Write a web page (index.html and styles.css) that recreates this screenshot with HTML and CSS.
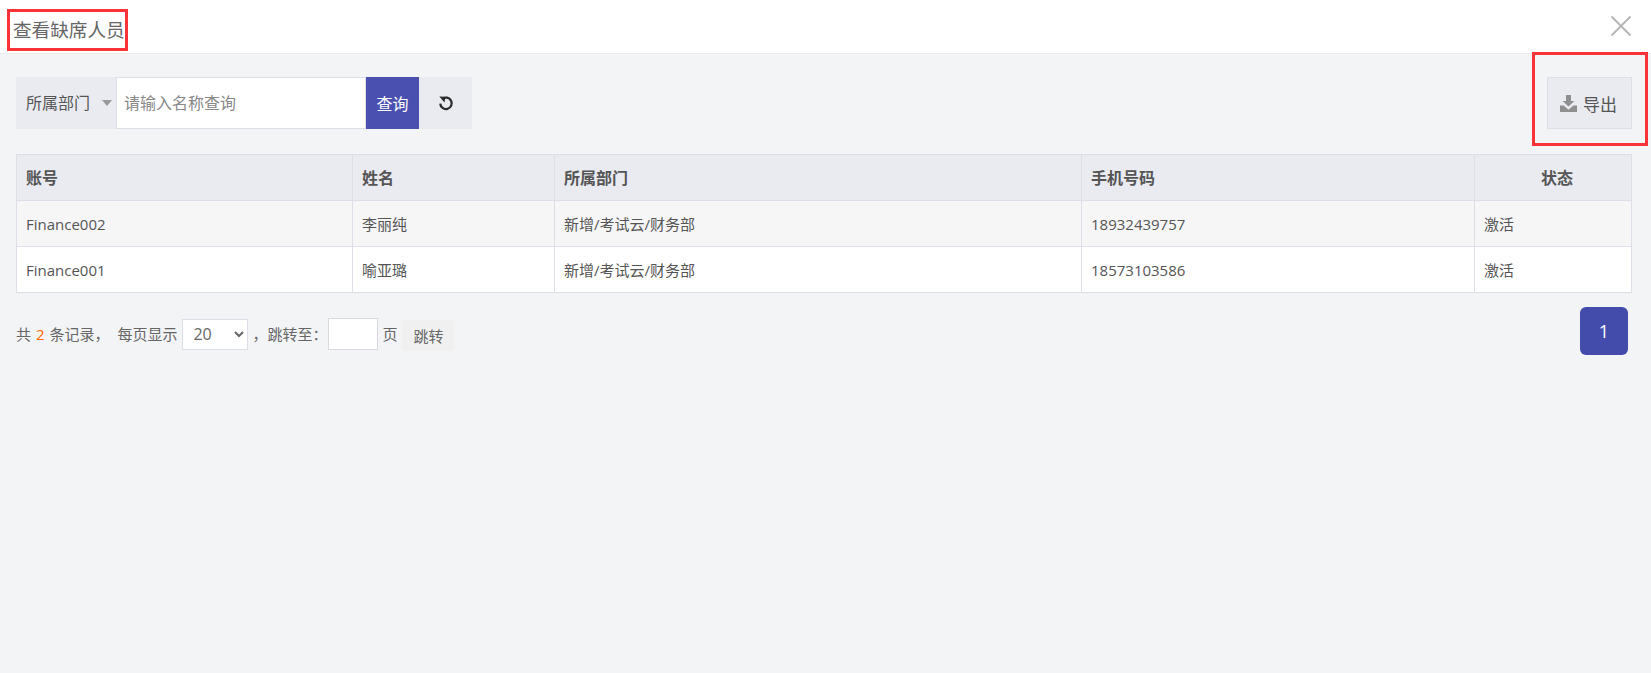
FILE: index.html
```html
<!DOCTYPE html>
<html lang="zh-CN">
<head>
<meta charset="utf-8">
<title>查看缺席人员</title>
<link rel="stylesheet" href="styles.css">
</head>
<body>
<header class="head">
  <h1 class="title">查看缺席人员</h1>
  <svg class="close" width="22" height="22" viewBox="0 0 22 22"><path d="M1.500 1.500l19 19M20.500 1.500l-19 19" stroke="#b4b4b4" stroke-width="1.800" fill="none"/></svg>
</header>
<main class="content">
  <div class="toolbar">
    <div class="search">
      <div class="dept"><span>所属部门</span><i class="caret"></i></div>
      <input class="kw" type="text" placeholder="请输入名称查询">
      <button class="query">查询</button>
      <button class="reset" aria-label="重置">
        <svg width="16" height="16" viewBox="0 0 16 16"><path d="M4.400 3.900A5.700 5.700 0 1 1 2.300 8.600" fill="none" stroke="#2b2b2b" stroke-width="2.300"/><path d="M1.300 1.400l6.200.4-1 5.800z" fill="#2b2b2b"/></svg>
      </button>
    </div>
    <button class="export">
      <svg width="17" height="17" viewBox="0 0 17 17"><path d="M6 0h5v6h3.400L8.500 11.500 2.600 6H6z" fill="#8f8f8f"/><path d="M0 10.500h3.600L8.500 14.700l4.900-4.200H17V17H0z" fill="#8f8f8f"/></svg>
      <span>导出</span>
    </button>
  </div>
  <table class="grid">
    <colgroup><col class="c1"><col class="c2"><col class="c3"><col class="c4"><col class="c5"></colgroup>
    <thead>
      <tr><th>账号</th><th>姓名</th><th>所属部门</th><th>手机号码</th><th class="center">状态</th></tr>
    </thead>
    <tbody>
      <tr class="odd"><td>Finance002</td><td>李丽纯</td><td>新增/考试云/财务部</td><td>18932439757</td><td>激活</td></tr>
      <tr><td>Finance001</td><td>喻亚璐</td><td>新增/考试云/财务部</td><td>18573103586</td><td>激活</td></tr>
    </tbody>
  </table>
  <div class="foot">
    <div class="pageinfo">
      <span class="count">共 <b class="num">2</b> 条记录，</span>
      <span class="per">每页显示</span>
      <select class="size"><option>20</option></select>
      <span class="jump">，跳转至：</span>
      <input class="to" type="text">
      <span class="ye">页</span>
      <button class="go">跳转</button>
    </div>
    <button class="page">1</button>
  </div>
</main>
<div class="mark mark-title"></div>
<div class="mark mark-export"></div>
</body>
</html>
```
FILE: styles.css
```css
* { box-sizing: border-box; }
html, body { height: 100%; }
body {
  margin: 0;
  height: 673px;
  overflow: hidden;
  background: #f3f4f6;
  color: #555;
  font-family: "Open Sans", "Noto Sans CJK SC", sans-serif;
  font-size: 15px;
  line-height: 20px;
  display: flex;
  flex-direction: column;
}
.head {
  height: 54px;
  flex: none;
  background: #fff;
  border-bottom: 1px solid #e9eaed;
  display: flex;
  align-items: center;
  justify-content: space-between;
  padding: 0 19px 0 13px;
}
.title { margin: 0; font-size: 18.6px; font-weight: 400; color: #666; line-height: 24px; padding-top: 6px; }
.close { margin-top: -2px; }
.content { padding: 23px 19px 0 16px; flex: 1; }
.toolbar { display: flex; justify-content: space-between; height: 52px; }
.search { display: flex; height: 52px; }
.dept {
  width: 100px;
  background: #e9ebf0;
  display: flex;
  align-items: center;
  padding-left: 10px;
  color: #555;
  font-size: 16px;
  gap: 12px;
  white-space: nowrap;
}
.caret { flex: none; width: 0; height: 0; border: 5px solid transparent; border-top: 6px solid #999; border-bottom: 0; }
.kw {
  width: 250px;
  height: 52px;
  border: 1px solid #dcdfe8;
  background: #fff;
  padding: 0 7px;
  font: 16px "Open Sans", "Noto Sans CJK SC", sans-serif;
  outline: none;
}
.kw::placeholder { color: #888; opacity: 1; }
.query {
  width: 53px;
  border: 0;
  background: #4a50b0;
  color: #fff;
  font: 16px "Open Sans", "Noto Sans CJK SC", sans-serif;
  padding: 0;
}
.reset {
  width: 53px;
  border: 0;
  background: #e9ebf0;
  padding: 0;
  display: flex;
  align-items: center;
  justify-content: center;
}
.export {
  width: 85px;
  height: 52px;
  border: 1px solid #dcdfe8;
  background: #e9ebf0;
  color: #555;
  font: 17px "Open Sans", "Noto Sans CJK SC", sans-serif;
  padding: 0 2px 0 0;
  display: flex;
  align-items: center;
  justify-content: center;
  gap: 6px;
}
.grid {
  margin-top: 25px;
  width: 1615px;
  border-collapse: collapse;
  table-layout: fixed;
  background: #fff;
}
.c1 { width: 336px; }
.c2 { width: 202px; }
.c3 { width: 527px; }
.c4 { width: 393px; }
.c5 { width: 157px; }
.grid th, .grid td {
  border: 1px solid #dcdfe8;
  height: 46px;
  padding: 0 9px;
  text-align: left;
  white-space: nowrap;
}
.grid th { background: #e9ebf0; font-size: 16px; font-weight: 700; color: #555; }
.grid th.center { text-align: center; padding-left: 17px; }
.grid td { font-size: 15px; color: #555; }
.odd td { background: #f6f6f7; }
.foot {
  display: flex;
  justify-content: space-between;
  align-items: flex-start;
  padding: 14px 4px 0 0;
}
.pageinfo { display: flex; align-items: center; height: 32px; margin-top: 11px; color: #666; font-size: 15px; white-space: nowrap; }
.count { word-spacing: 1px; }
.num { color: #f60; font-weight: 400; }
.per { margin-left: 8px; }
.size {
  width: 66px;
  height: 31px;
  margin-left: 5px;
  border: 1px solid #dcdfe8;
  background: #fff;
  color: #666;
  padding: 0 6px;
  font: 16px "Open Sans", sans-serif;
  border-radius: 0;
}
.jump { margin-left: 4px; }
.to { width: 50px; height: 32px; margin-left: 1px; border: 1px solid #d8dae0; background: #fff; }
.ye { margin-left: 4px; }
.go {
  width: 52px;
  height: 31px;
  margin-left: 5px;
  margin-top: 3px;
  border: 0;
  border-radius: 3px;
  background: #f0f0f0;
  color: #666;
  font: 15px "Open Sans", "Noto Sans CJK SC", sans-serif;
  padding: 0;
}
.page {
  width: 48px;
  height: 48px;
  border: 0;
  border-radius: 6px;
  background: #434bab;
  color: #fff;
  font: 18px "Open Sans", sans-serif;
  padding: 0;
}
.mark { position: absolute; border: 3px solid #fa3338; pointer-events: none; }
.mark-title { left: 7px; top: 9px; width: 121px; height: 42px; }
.mark-export { left: 1532px; top: 52px; width: 116px; height: 94px; }
```
